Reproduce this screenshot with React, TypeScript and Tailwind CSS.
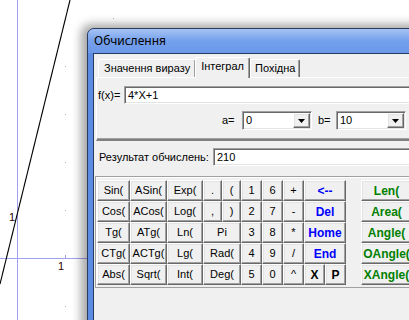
import React from 'react';

const raised =
  "flex items-center justify-center bg-[#f0f0f0] border border-t-white border-l-white border-r-[#696969] border-b-[#696969] shadow-[inset_-1px_-1px_0_#a0a0a0,inset_1px_1px_0_#e3e3e3]";
const sunken =
  "bg-white border border-t-[#a0a0a0] border-l-[#a0a0a0] border-r-white border-b-white shadow-[inset_1px_1px_0_#696969,inset_-1px_-1px_0_#e3e3e3]";

type B = { t: string; span?: number; cls?: string };

const rows: B[][] = [
  [{ t: 'Sin(' }, { t: 'ASin(' }, { t: 'Exp(' }, { t: '.' }, { t: '(' }, { t: '1' }, { t: '6' }, { t: '+' }, { t: '<--', span: 2, cls: 'text-[#0000ff] font-bold text-[12px]' }],
  [{ t: 'Cos(' }, { t: 'ACos(' }, { t: 'Log(' }, { t: ',' }, { t: ')' }, { t: '2' }, { t: '7' }, { t: '-' }, { t: 'Del', span: 2, cls: 'text-[#0000ff] font-bold text-[12px]' }],
  [{ t: 'Tg(' }, { t: 'ATg(' }, { t: 'Ln(' }, { t: 'Pi', span: 2 }, { t: '3' }, { t: '8' }, { t: '*' }, { t: 'Home', span: 2, cls: 'text-[#0000ff] font-bold text-[12px]' }],
  [{ t: 'CTg(' }, { t: 'ACTg(' }, { t: 'Lg(' }, { t: 'Rad(', span: 2 }, { t: '4' }, { t: '9' }, { t: '/' }, { t: 'End', span: 2, cls: 'text-[#0000ff] font-bold text-[12px]' }],
  [{ t: 'Abs(' }, { t: 'Sqrt(' }, { t: 'Int(' }, { t: 'Deg(', span: 2 }, { t: '5' }, { t: '0' }, { t: '^' }, { t: 'X', cls: 'font-bold text-[12px]' }, { t: 'P', cls: 'font-bold text-[12px]' }],
];

const green = ['Len(', 'Area(', 'Angle(', 'OAngle(', 'XAngle('];

function Combo({ value }: { value: string }) {
  return (
    <div className={`${sunken} w-[70px] h-[19px] flex items-center`}>
      <span className="flex-1 pl-[3px] text-[11px] leading-none">{value}</span>
      <div className={`${raised} w-[17px] h-[15px] mr-[1px]`}>
        <svg width="7" height="4" viewBox="0 0 7 4">
          <path d="M0 0H7L3.5 4Z" fill="#000" />
        </svg>
      </div>
    </div>
  );
}

export default function App() {
  return (
    <div className="relative w-[409px] h-[320px] overflow-hidden bg-white font-['Liberation_Sans',Arial,sans-serif] text-black">
      <svg className="absolute left-0 top-0" width="409" height="320">
        <line x1="17.5" y1="0" x2="17.5" y2="320" stroke="#a0a0f0" />
        <line x1="0" y1="258.5" x2="409" y2="258.5" stroke="#a0a0f0" />
        <line x1="65.5" y1="255" x2="65.5" y2="258" stroke="#a0a0f0" />
        {[18, 66, 114, 162, 210, 306].map((y) => (
          <rect key={y} x="65" y={y} width="1" height="1" fill="#b0b0b0" />
        ))}
        <rect x="113" y="18" width="1" height="1" fill="#b0b0b0" />
        <line x1="70" y1="0" x2="0" y2="284" stroke="#000" strokeWidth="1.1" />
        <text x="9" y="221" fontSize="11" fill="#300000" fontFamily="Liberation Sans, Arial, sans-serif">1</text>
        <text x="58" y="270" fontSize="11" fill="#300000" fontFamily="Liberation Sans, Arial, sans-serif">1</text>
      </svg>

      <div className="absolute left-[87px] top-[28px] w-[340px] h-[310px] rounded-tl-[7px] border border-[#2a3b60] bg-[#5c8ce2] shadow-[-3px_-1px_10px_3px_rgba(0,0,0,0.35)] flex flex-col overflow-hidden">
        <div className="h-[24px] flex items-center pl-[6px] bg-gradient-to-b from-[#a7c3f4] via-[#74a0ec] to-[#6b99e8] text-[12px] font-['Noto_Sans','Liberation_Sans',sans-serif]">
          Обчислення
        </div>
        <div className="flex-1 ml-[5px] border-t border-l border-[#263a63] bg-[#f0f0f0] text-[11px] flex flex-col">
          {/* tab control */}
          <div className="ml-[2px] mt-[3px] flex flex-col">
            <div className="h-[20px] flex items-end">
              <div className="ml-[2px] h-[18px] px-[5px] flex items-center border-t border-l border-white border-r border-r-[#696969] shadow-[inset_-1px_0_0_#a0a0a0] rounded-t-[2px]">
                Значення виразу
              </div>
              <div className="relative z-10 h-[21px] -mb-[1px] -ml-[1px] px-[5px] pb-[3px] flex items-center bg-[#f0f0f0] border-t border-l border-white border-r border-r-[#696969] shadow-[inset_-1px_0_0_#a0a0a0] rounded-t-[2px]">
                Інтеграл
              </div>
              <div className="h-[18px] px-[4px] flex items-center border-t border-l border-white border-r border-r-[#696969] shadow-[inset_-1px_0_0_#a0a0a0] rounded-t-[2px]">
                Похідна
              </div>
            </div>
            <div className="h-[64px] border-t border-l border-white border-b-2 border-b-[#808080] shadow-[inset_0_-1px_0_#a0a0a0] flex flex-col">
              <div className="mt-[8px] ml-[1px] flex items-center h-[18px]">
                <span className="w-[26px]">f(x)=</span>
                <div className={`${sunken} flex-1 h-[18px] flex items-center pl-[3px]`}>4*X+1</div>
              </div>
              <div className="mt-[7px] ml-[125px] flex items-center h-[19px]">
                <span className="w-[20px]">a=</span>
                <Combo value="0" />
                <span className="ml-[6px] w-[18px]">b=</span>
                <Combo value="10" />
              </div>
            </div>
          </div>
          {/* result */}
          <div className="mt-[7px] ml-[5px] flex items-center h-[18px]">
            <span className="w-[114px]">Результат обчислень:</span>
            <div className={`${sunken} flex-1 h-[18px] flex items-center pl-[3px]`}>210</div>
          </div>
          {/* buttons */}
          <div className="mt-[10px] ml-[1px] h-[112px] border-t border-l border-b border-[#a0a0a0] shadow-[inset_1px_1px_0_#ffffff] pt-[3px] pl-[1px] flex">
            <div className="grid grid-cols-[33px_37px_36px_19px_19px_21px_21px_21px_21px_21px] grid-rows-[21px_21px_21px_21px_21px] h-[105px]">
              {rows.flatMap((r, i) =>
                r.map((b, j) => (
                  <div
                    key={`${i}-${j}`}
                    className={`${raised} ${b.span === 2 ? 'col-span-2' : ''} ${b.cls ?? 'text-[11px]'}`}
                  >
                    {b.t}
                  </div>
                ))
              )}
            </div>
            <div className="ml-[15px] flex flex-col">
              {green.map((g) => (
                <div key={g} className={`${raised} w-[51px] h-[21px] text-[#008000] font-bold text-[12px]`}>
                  {g}
                </div>
              ))}
            </div>
          </div>
        </div>
      </div>
    </div>
  );
}
